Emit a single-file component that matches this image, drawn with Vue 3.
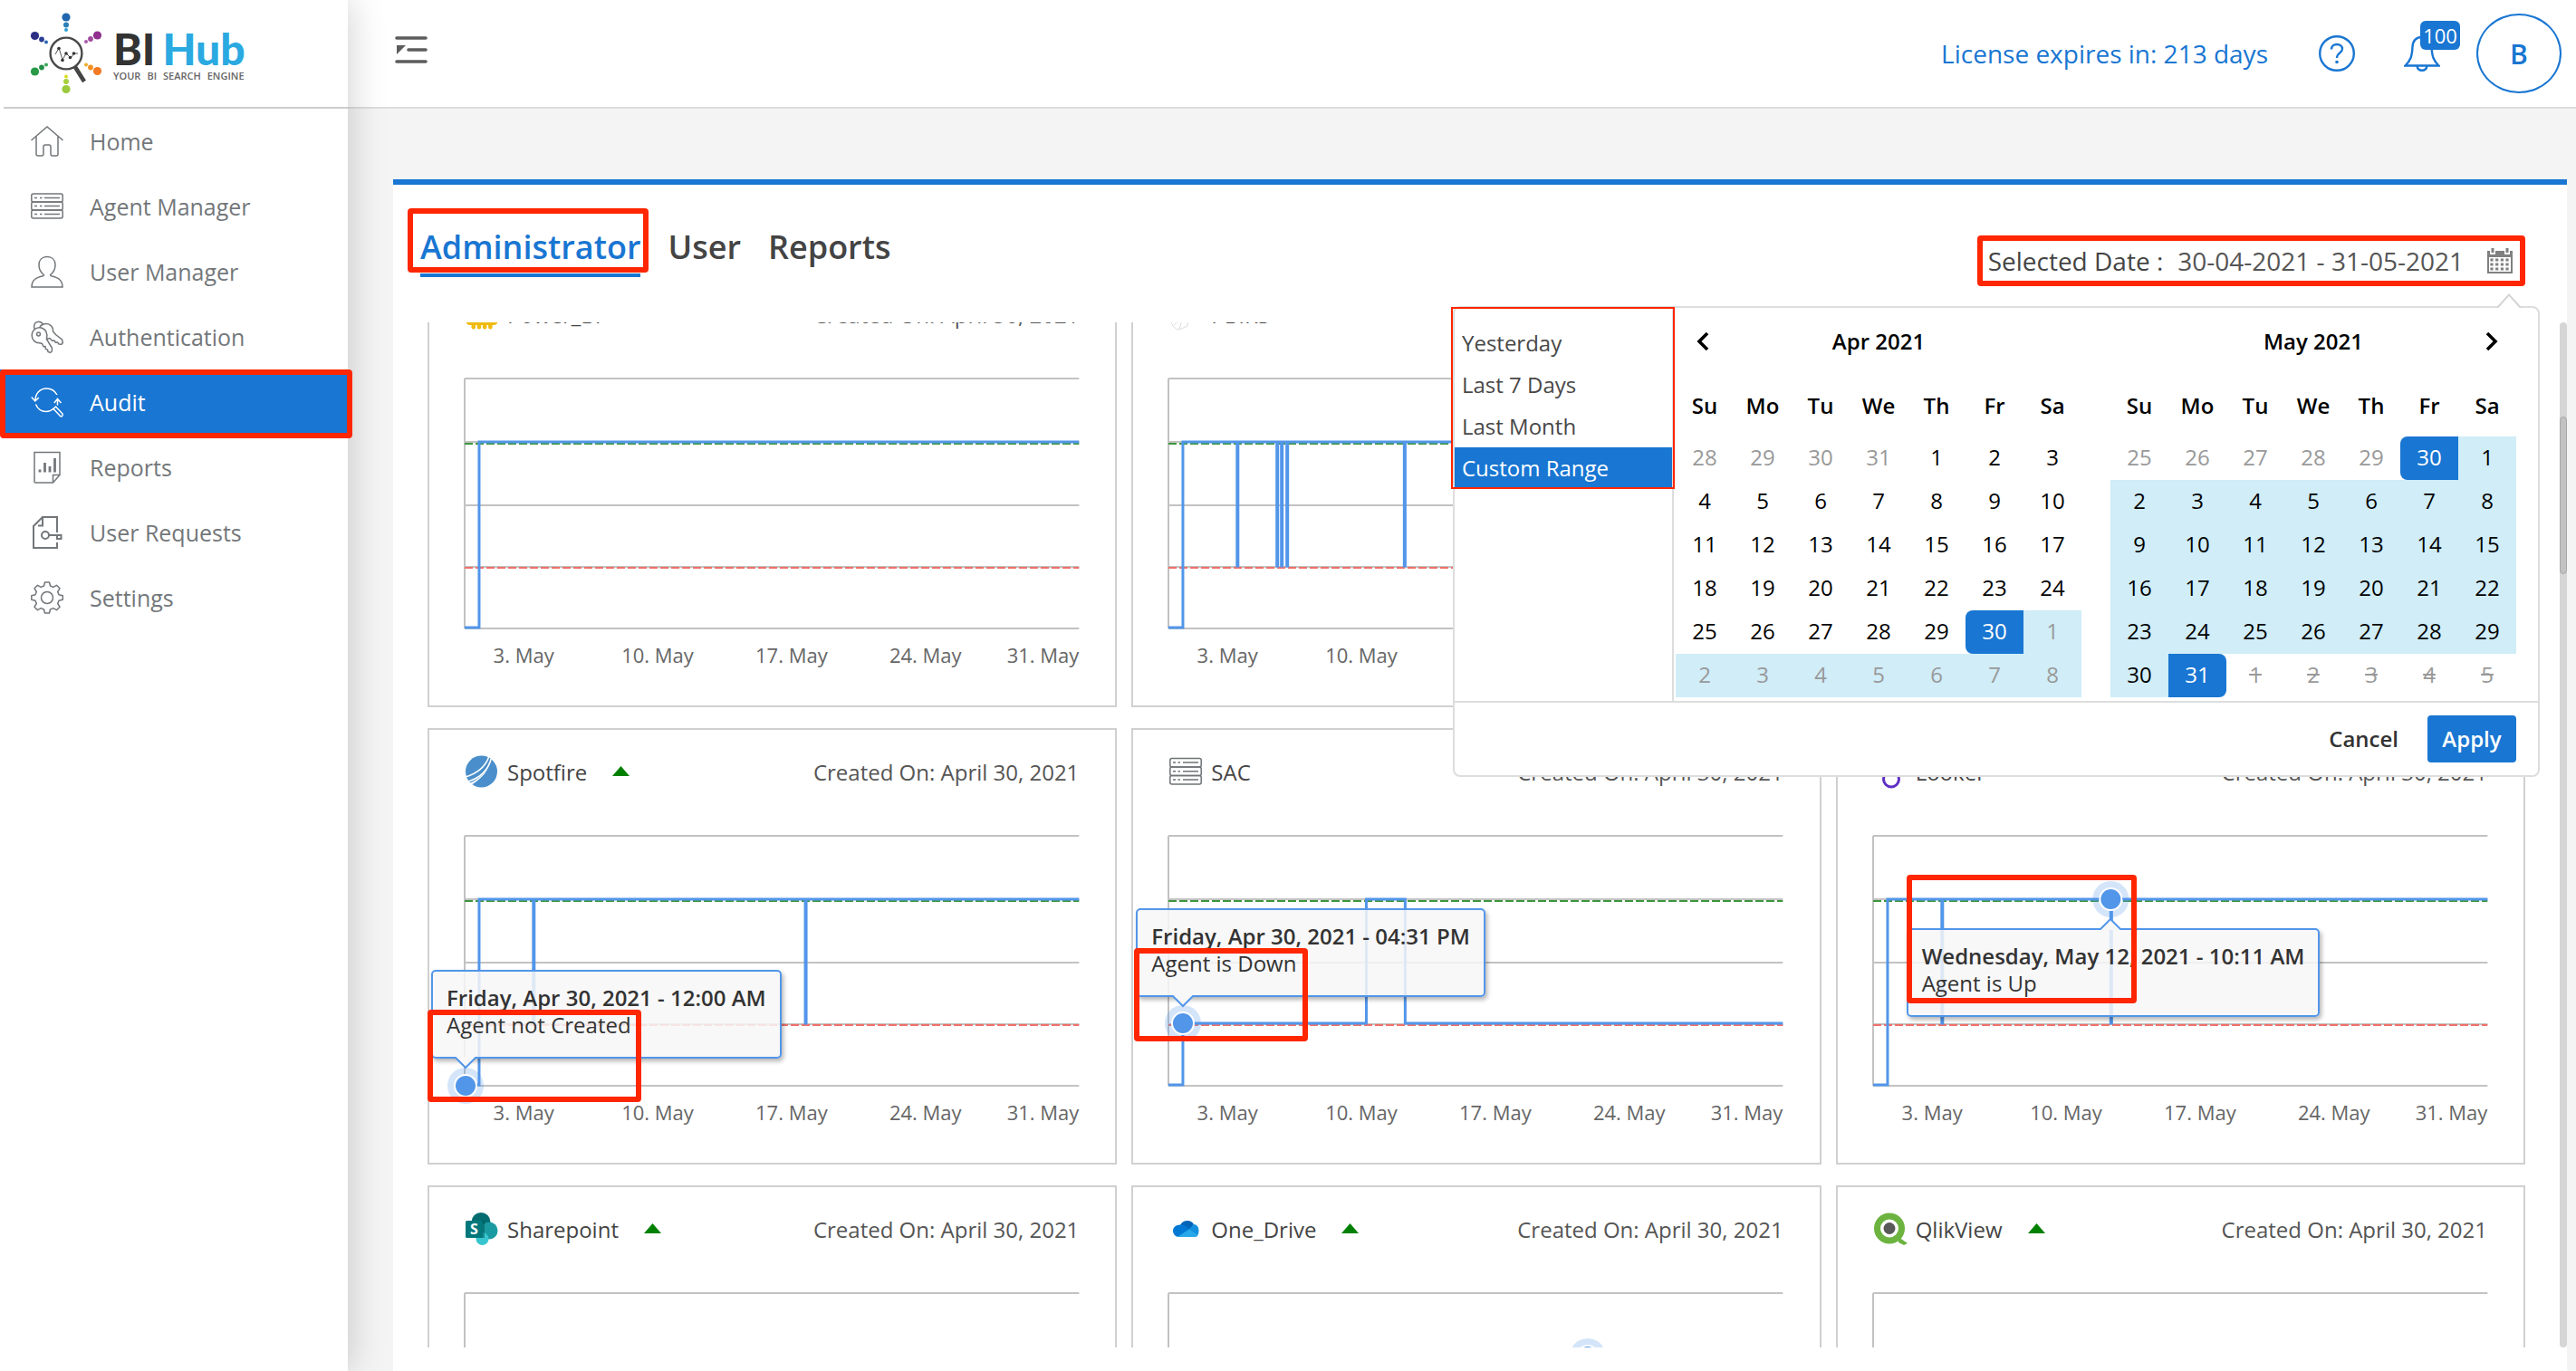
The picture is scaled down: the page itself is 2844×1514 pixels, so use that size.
<script setup>
import { ref } from 'vue'

const nav = [
  { label: 'Home', icon: 'home' },
  { label: 'Agent Manager', icon: 'server' },
  { label: 'User Manager', icon: 'user' },
  { label: 'Authentication', icon: 'keys' },
  { label: 'Audit', icon: 'audit', active: true },
  { label: 'Reports', icon: 'report' },
  { label: 'User Requests', icon: 'request' },
  { label: 'Settings', icon: 'gear' },
]

const tabs = ['Administrator', 'User', 'Reports']
const activeTab = ref('Administrator')

const presets = ['Yesterday', 'Last 7 Days', 'Last Month', 'Custom Range']
const activePreset = ref('Custom Range')

const weekdays = ['Su', 'Mo', 'Tu', 'We', 'Th', 'Fr', 'Sa']

// Builds six weeks of cells; `first` is the date in the top-left corner.
function buildMonth(title, month, first) {
  const rangeStart = new Date(2021, 3, 30)
  const rangeEnd = new Date(2021, 4, 31)
  const weeks = []
  for (let w = 0; w < 6; w++) {
    const row = []
    for (let d = 0; d < 7; d++) {
      const day = new Date(first.getFullYear(), first.getMonth(), first.getDate() + w * 7 + d)
      row.push({
        n: day.getDate(),
        cls: {
          off: day.getMonth() !== month,
          'in-range': day > rangeStart && day < rangeEnd,
          start: +day === +rangeStart,
          end: +day === +rangeEnd,
          disabled: day > rangeEnd,
        },
      })
    }
    weeks.push(row)
  }
  return { title, weeks }
}

const months = [
  buildMonth('Apr 2021', 3, new Date(2021, 2, 28)),
  buildMonth('May 2021', 4, new Date(2021, 3, 25)),
]

const ticks = [
  { x: '9.6%', label: '3. May', anchor: 'middle' },
  { x: '31.4%', label: '10. May', anchor: 'middle' },
  { x: '53.2%', label: '17. May', anchor: 'middle' },
  { x: '75%', label: '24. May', anchor: 'middle' },
  { x: '100%', label: '31. May', anchor: 'end' },
]

// Plot space is 680 units wide. Levels: up, down, not created.
const UP = 71
const DOWN = 208
const NONE = 276

function upWithDrops(drops) {
  let d = `M0 ${NONE}H16V${UP}`
  for (const x of drops) d += `H${x}V${DOWN}H${x + 1}V${UP}`
  return d + 'H680'
}

const agents = [
  { name: 'Power_BI', icon: 'powerbi', up: true, path: upWithDrops([]) },
  { name: 'PBIRS', icon: 'pbirs', up: true, path: upWithDrops([76, 120, 125, 131, 261]) },
  { name: 'Tableau', icon: 'server', up: true, path: upWithDrops([]) },
  {
    name: 'Spotfire', icon: 'spotfire', up: true, path: upWithDrops([76, 377]),
    marker: { x: 1, y: 277 },
    tip: { left: -37, top: 149, arrow: 38, dir: 'down', title: 'Friday, Apr 30, 2021 - 12:00 AM', text: 'Agent not Created' },
    callout: { left: -41, top: 193, width: 236, height: 102 },
  },
  {
    name: 'SAC', icon: 'server', up: false,
    path: `M0 ${NONE}H16V${DOWN}H219V${UP}H262V${DOWN}H680`,
    marker: { x: 16, y: 208 },
    tip: { left: -36, top: 81, arrow: 52, dir: 'down', title: 'Friday, Apr 30, 2021 - 04:31 PM', text: 'Agent is Down' },
    callout: { left: -38, top: 125, width: 192, height: 103 },
  },
  {
    name: 'Looker', icon: 'looker', up: true, path: upWithDrops([76, 263]),
    marker: { x: 263, y: 71 },
    tip: { left: 37, top: 103, arrow: 225, dir: 'up', title: 'Wednesday, May 12, 2021 - 10:11 AM', text: 'Agent is Up' },
    callout: { left: 37, top: 44, width: 254, height: 142 },
  },
  { name: 'Sharepoint', icon: 'sharepoint', up: true, path: upWithDrops([]) },
  { name: 'One_Drive', icon: 'onedrive', up: true, path: upWithDrops([]), marker: { x: 464, y: 71 } },
  { name: 'QlikView', icon: 'qlik', up: true, path: upWithDrops([]) },
]
</script>

<template>
  <div class="app">
    <aside class="sidebar">
      <div class="brand">
        <svg class="brand-mark" viewBox="0 0 80 90" aria-hidden="true">
          <g>
            <circle cx="40" cy="5" r="4.6" fill="#2066ac" /><circle cx="40" cy="13.5" r="3" fill="#2b7fb8" /><circle cx="40" cy="19" r="2" fill="#2c9fd0" />
            <circle cx="74.5" cy="25" r="4.6" fill="#90308f" /><circle cx="67" cy="29" r="2.9" fill="#a04ba0" /><circle cx="62" cy="32" r="2" fill="#a85aa8" />
            <circle cx="74.5" cy="64.5" r="4.6" fill="#f27a24" /><circle cx="67" cy="60.5" r="2.9" fill="#f59120" /><circle cx="62" cy="57.5" r="2" fill="#edae28" />
            <circle cx="40" cy="84.5" r="4.6" fill="#9bca3c" /><circle cx="40" cy="76" r="3" fill="#a5cf3c" /><circle cx="40" cy="70.5" r="2" fill="#d9e021" />
            <circle cx="5.5" cy="65" r="4.6" fill="#289a48" /><circle cx="13" cy="60.5" r="2.9" fill="#259048" /><circle cx="18" cy="57.5" r="2" fill="#3aa655" />
            <circle cx="5.5" cy="25.5" r="4.6" fill="#2b2e83" /><circle cx="13" cy="29.5" r="2.9" fill="#2a3f96" /><circle cx="18" cy="32.5" r="2" fill="#2a66b0" />
          </g>
          <circle cx="40" cy="45" r="17.4" fill="#fff" stroke="#484848" stroke-width="2.4" />
          <path d="M50 60l10 16" stroke="#444" stroke-width="4.6" />
          <path d="M28 46l4-7 4 13 4-7 5 5 4-5h4" fill="none" stroke="#555" stroke-width="1" />
          <g fill="#333"><circle cx="32" cy="39.5" r="1.8" /><circle cx="36" cy="52.5" r="1.8" /><circle cx="40" cy="45" r="1.8" /><circle cx="44.5" cy="49.5" r="1.8" /><circle cx="48.5" cy="45" r="1.8" /></g>
        </svg>
        <div class="brand-text">
          <div class="brand-name"><span class="dark">BI</span><span class="blue">Hub</span></div>
          <div class="brand-tag"><span>YOUR</span><span>BI</span><span>SEARCH</span><span>ENGINE</span></div>
        </div>
      </div>
      <nav class="nav">
        <a v-for="item in nav" :key="item.label" href="#" class="nav-item" :class="{ active: item.active }">
          <svg class="nav-icon" viewBox="0 0 36 36" aria-hidden="true">
            <path v-if="item.icon === 'home'" d="M.5 17L18 2l17.500 15M6 12.500V32q0 2 2 2h4q2 0 2-2v-8q0-2 2-2h4q2 0 2 2v8q0 2 2 2h4q2 0 2-2V12.500" />
            <g v-else-if="item.icon === 'server'">
              <rect x=".8" y="4" width="34.4" height="9" rx="2" /><rect x=".8" y="13" width="34.4" height="9" rx="2" /><rect x=".8" y="22" width="34.4" height="9" rx="2" />
              <path d="M4 8.500h3M10 8.500h2.500M15 8.500h17M4 17.500h3M10 17.500h2.500M15 17.500h17M4 26.500h3M10 26.500h2.500M15 26.500h17" />
            </g>
            <path v-else-if="item.icon === 'user'" d="M14.500 21.500C11 19 9 14.500 9 10.500 9 5 12.500 1.500 18 1.500s9 3.500 9 9c0 4-2 8.500-5.500 11 0 1 0 1 1 1.300C30 24.500 35 27 35 35H1c0-8 5-10.500 12.500-12.200 1-.3 1-.3 1-1.300z" />
            <g v-else-if="item.icon === 'keys'">
              <circle cx="8.5" cy="15" r="1.9" /><path d="M13 8.500C7.500 6 1.200 10 1.200 16.500c0 5 4 8.500 8.500 8.200l2.800.8 1.500 3.200 2-.2.5 3 2 .5.5 2.500 2.500 1 1.800-1.500.2-3.500-6-10C18.500 15.500 17.500 10.500 13 8.500z" />
              <path d="M4 9.500C2.500 4.500 5 1.200 8.500 1.200c2.500 0 4 1 5 3C20 2 25 6.500 24.500 12l3 3.500 7 5.500.8 3.500-1.300 1.700-3-.2-1.500-2-2.200.2-1.300-2.200-2.500.2L21 19.500l-4 1M10 8c0-2 1-3 3.500-3.800" />
            </g>
            <g v-else-if="item.icon === 'audit'">
              <path d="M5 16C5 8.500 10 3 17.500 3c5 0 9 2.500 11.500 7M.8 12.500L4.800 17l4-4M5.500 20.500C7.500 25.500 12 28.500 17 28.500c3.500 0 6-1.200 8.500-3.500M29.500 21.500V15M25.800 19l3.700-4.500L33.500 19" />
              <path d="M25 25.500l2.500-2.500 7.500 8c1 1.500-.8 3.500-2.500 2.500z" />
            </g>
            <g v-else-if="item.icon === 'report'">
              <path d="M4 1.500h28v25L24.500 35H5q-1 0-1-1zM32 26.500h-7.500V35" /><path d="M10 20.500v3M15.500 13v10.500M21 17v6.500M26.500 8v15.500" stroke-width="2.8" />
            </g>
            <g v-else-if="item.icon === 'request'" stroke-width="2">
              <path d="M29 18V1H13L3 11v24h26v-6M13 1v9.500H8" /><circle cx="16" cy="21" r="4" /><path d="M20 21h13.500v4H29v-4" />
            </g>
            <g v-else>
              <circle cx="18" cy="18" r="6.5" />
              <path d="M15.500 1h5l1 4 3.300 1.400L28.500 4.300 32 7.800l-2.300 3.700L31 14.700l4.300 1v4.600l-4.300 1-1.300 3.200 2.300 3.700-3.500 3.500-3.700-2.100-3.300 1.400-1 4h-5l-1-4-3.300-1.400-3.700 2.100L4 28.200l2.300-3.700L5 21.300l-4.200-1v-4.600l4.200-1 1.300-3.200L4 7.800l3.500-3.500 3.700 2.100L14.500 5z" stroke-linejoin="round" />
            </g>
          </svg>
          <span>{{ item.label }}</span>
          <i v-if="item.active" class="callout nav-callout"></i>
        </a>
      </nav>
    </aside>

    <div class="main">
      <header class="topbar">
        <button class="icon-btn menu" aria-label="Toggle menu">
          <svg width="36" height="30" viewBox="0 0 36 30"><path d="M2 2h32M15 15h19M2 28h32" stroke="#5c5c5c" stroke-width="3.6" stroke-linecap="round" /><path d="M2 10h10L2 20z" fill="#5c5c5c" /></svg>
        </button>
        <span class="license">License expires in: 213 days</span>
        <button class="icon-btn help" aria-label="Help">
          <svg width="40" height="40" viewBox="0 0 40 40" fill="none" stroke="#1976d2"><circle cx="20" cy="20" r="18.8" stroke-width="2.4" /><path d="M14 15.500c0-3.500 2.500-5.500 6-5.500s6 2 6 5c0 4.500-6 4.500-6 10" stroke-width="2.4" /><circle cx="20" cy="29.5" r="1.8" fill="#1976d2" stroke="none" /></svg>
        </button>
        <button class="icon-btn bell" aria-label="Notifications">
          <svg width="40" height="40" viewBox="0 0 40 40" fill="none" stroke="#1976d2" stroke-width="2.4"><path d="M20 2c-7 0-10 4.500-10.500 10.500C9 24 7 28 1.500 33.500h37C33 28 31 24 30.500 12.500 30 6.500 27 2 20 2zM14.500 34c.5 3 2.500 4.800 5.500 4.800s5-1.800 5.500-4.800" /></svg>
          <span class="badge">100</span>
        </button>
        <button class="avatar">B</button>
      </header>

      <section class="panel">
        <div class="toolbar">
          <div class="tabs" role="tablist">
            <button v-for="t in tabs" :key="t" role="tab" class="tab" :class="{ active: t === activeTab }" @click="activeTab = t">
              {{ t }}<i v-if="t === activeTab" class="callout tab-callout"></i>
            </button>
          </div>
          <button class="date-trigger">
            <span class="date-label">Selected Date :</span>
            <span class="date-value">30-04-2021 - 31-05-2021</span>
            <svg width="28" height="28" viewBox="0 0 28 28"><path d="M0 3h3v4h6V3h10v4h6V3h3v25H0z" fill="#808080" /><rect x="2" y="10" width="24" height="16" fill="#fff" /><path d="M4.500 0h3v5h-3zM20.500 0h3v5h-3z" fill="#808080" /><path d="M5 11.500v13M10.700 11.500v13M16.400 11.500v13M22 11.500v13" stroke="#808080" stroke-width="3.2" stroke-dasharray="3 2" /></svg>
            <i class="callout fill"></i>
          </button>
        </div>

        <div class="scroller">
          <div class="viewport">
            <div class="grid">
              <article v-for="a in agents" :key="a.name" class="card">
                <header class="card-head">
                  <svg class="logo" viewBox="0 0 36 36" aria-hidden="true">
                    <g v-if="a.icon === 'powerbi'" fill="#eebb11"><path d="M2 10h32v15q0 3.500-3 3.500H5q-3 0-3-3.500z" fill="none" stroke="#eebb11" stroke-width="3" /><rect x="6.5" y="20" width="4.5" height="14.500" rx="2" /><rect x="12.7" y="12" width="4.5" height="22.500" rx="2" /><rect x="18.900" y="8" width="4.500" height="26.500" rx="2" /><rect x="25.100" y="4" width="4.500" height="30.500" rx="2" /></g>
                    <g v-else-if="a.icon === 'pbirs'" fill="none" stroke="#dcdcdc"><path d="M1 20c0 9 5 15 10 15l9-4V16zM5 30l14-12M11 35l4-14M2 25h17" /></g>
                    <g v-else-if="a.icon === 'spotfire'"><circle cx="17.500" cy="18" r="17.500" fill="#4a8fcb" /><path d="M26 1C22 13 13 20 0 24M28.500 3C25 17 16 25 3 29" fill="none" stroke="#fff" stroke-width="1.600" /><path d="M28 3C26 16 17 26 4 31l2 2C18 26 26 17 28 3z" fill="#fff" /></g>
                    <g v-else-if="a.icon === 'server'" fill="none" stroke="#6f7376" stroke-width="1.500"><rect x=".8" y="3.500" width="34.400" height="9.500" rx="2" /><rect x=".8" y="13" width="34.400" height="9.500" rx="2" /><rect x=".8" y="22.500" width="34.400" height="9.500" rx="2" /><path d="M4 8h3M9.500 8H12M15 8h17M4 17.700h3M9.500 17.700H12M15 17.700h17M4 27h3M9.500 27H12M15 27h17" /></g>
                    <g v-else-if="a.icon === 'looker'" fill="none" stroke="#5f2fc4" stroke-width="3"><circle cx="19" cy="26.500" r="8.500" /><circle cx="14" cy="10" r="4" /><circle cx="9" cy="3" r="1.500" /></g>
                    <g v-else-if="a.icon === 'sharepoint'"><circle cx="17" cy="10.500" r="10.500" fill="#036c70" /><circle cx="26" cy="20" r="9.500" fill="#1a9ba1" /><circle cx="18.500" cy="29" r="7" fill="#37c6d0" /><rect x="11" y="9" width="10" height="19" fill="#024f52" opacity=".5" /><rect y="9" width="19" height="19" rx="1.500" fill="#03787c" /><text x="9.500" y="24" text-anchor="middle" font-size="16" font-weight="700" fill="#fff">S</text></g>
                    <g v-else-if="a.icon === 'onedrive'" transform="translate(2 0)"><path d="M10 14a8.500 8.500 0 0 1 15-1l-5 7z" fill="#0364b8" /><path d="M10 13.500c-5 0-8 3-8 6.500 0 4 3 7 6.500 7L20 19c-3-4-6-5.500-10-5.500z" fill="#0078d4" /><path d="M25 13c4 0 5.500 4 5.500 7.500S29 26 27 27l-8-8z" fill="#1490df" /><path d="M6.500 27L20 18.500 29.500 25q-1 2-3.500 2z" fill="#28a8ea" /></g>
                    <g v-else><path d="M27 27l10 7-4 2-6-3z" fill="#6cb33f" /><circle cx="17" cy="17.500" r="13.500" fill="none" stroke="#6cb33f" stroke-width="7" /><circle cx="17" cy="17.500" r="6.500" fill="#595959" /></g>
                  </svg>
                  <h3>{{ a.name }}</h3>
                  <svg v-if="a.up" class="trend" width="20" height="12" viewBox="0 0 20 12"><path d="M9.500 0L19 11H0z" fill="green" /></svg>
                  <span class="created">Created On: April 30, 2021</span>
                </header>
                <div class="chart">
                  <svg class="chart-svg" aria-hidden="true">
                    <svg class="plot" width="100%" height="278" viewBox="0 0 680 278" preserveAspectRatio="none">
                      <path class="gridline" d="M0 1H680M0 71H680M0 141H680M0 209H680M0 277H680M0 1V277" />
                      <path class="limit up" d="M0 73H680" />
                      <path class="limit down" d="M0 210H680" />
                      <path class="series" :d="a.path" />
                    </svg>
                    <text v-for="t in ticks" :key="t.label" :x="t.x" y="315" :text-anchor="t.anchor">{{ t.label }}</text>
                    <g v-if="a.marker">
                      <circle :cx="(a.marker.x / 6.8) + '%'" :cy="a.marker.y" r="20" fill="#5296ea" opacity=".25" />
                      <circle :cx="(a.marker.x / 6.8) + '%'" :cy="a.marker.y" r="12" fill="#5296ea" stroke="#fff" stroke-width="2" />
                    </g>
                  </svg>
                  <div v-if="a.tip" class="tip" :style="{ left: a.tip.left + 'px', top: a.tip.top + 'px' }">
                    <strong>{{ a.tip.title }}</strong>
                    <span>{{ a.tip.text }}</span>
                    <svg class="tip-arrow" :class="a.tip.dir" width="26" height="14" viewBox="0 0 26 14" :style="{ left: a.tip.arrow - 15 + 'px' }">
                      <path :d="a.tip.dir === 'down' ? 'M1 0L13 12 25 0' : 'M1 14L13 2 25 14'" fill="#f7f7f7" stroke="#5296ea" stroke-width="2" />
                    </svg>
                  </div>
                  <i v-if="a.callout" class="callout" :style="{ left: a.callout.left + 'px', top: a.callout.top + 'px', width: a.callout.width + 'px', height: a.callout.height + 'px' }"></i>
                </div>
              </article>
            </div>
          </div>
          <div class="scrollbar"><div class="thumb"></div></div>
        </div>

        <div class="picker">
          <svg class="picker-arrow" width="28" height="16" viewBox="0 0 28 16"><path d="M1 16L14 1.500 27 16" fill="#fff" stroke="#d4d4d4" stroke-width="2" /></svg>
          <div class="picker-body">
            <div class="presets">
              <ul>
                <li v-for="p in presets" :key="p">
                  <button :class="{ active: p === activePreset }" @click="activePreset = p">{{ p }}</button>
                </li>
              </ul>
              <i class="callout thin presets-callout"></i>
            </div>
            <div class="months">
              <table v-for="(m, i) in months" :key="m.title">
                <thead>
                  <tr class="title-row">
                    <th><button v-if="i === 0" class="arrow prev" aria-label="Previous month"><svg width="16" height="22" viewBox="0 0 16 22"><path d="M13 2L4 11l9 9" fill="none" stroke="#000" stroke-width="3.6" /></svg></button></th>
                    <th colspan="5">{{ m.title }}</th>
                    <th><button v-if="i === 1" class="arrow next" aria-label="Next month"><svg width="16" height="22" viewBox="0 0 16 22"><path d="M3 2l9 9-9 9" fill="none" stroke="#000" stroke-width="3.6" /></svg></button></th>
                  </tr>
                  <tr class="week-row"><th v-for="w in weekdays" :key="w">{{ w }}</th></tr>
                </thead>
                <tbody>
                  <tr v-for="(row, r) in m.weeks" :key="r">
                    <td v-for="(c, k) in row" :key="k" :class="c.cls">{{ c.n }}</td>
                  </tr>
                </tbody>
              </table>
            </div>
          </div>
          <div class="picker-foot">
            <button class="cancel">Cancel</button>
            <button class="apply">Apply</button>
          </div>
        </div>
      </section>
    </div>
  </div>
</template>

<style>
body { background: #f4f4f4; }
</style>

<style scoped>
* { box-sizing: border-box; }
.app {
  display: flex;
  height: 100vh;
  overflow: hidden;
  font-family: "Open Sans", "Noto Sans", sans-serif;
  font-size: 24px;
  color: #444;
}
button { font: inherit; color: inherit; background: none; border: 0; padding: 0; margin: 0; cursor: pointer; }
.icon-btn { display: inline-flex; position: relative; }
.callout {
  position: absolute;
  border: 6px solid #ff2600;
  border-radius: 4px;
  pointer-events: none;
  z-index: 5;
}
.callout.thin { border-width: 2px; border-radius: 0; }
.callout.fill { inset: 0; }

.sidebar {
  position: relative;
  z-index: 4;
  flex: none;
  width: 384px;
  background: #fff;
  box-shadow: 0 0 40px rgba(0, 0, 0, .2);
}
.brand {
  display: flex;
  align-items: center;
  gap: 12px;
  height: 120px;
  margin-left: 4px;
  padding-left: 29px;
  border-bottom: 2px solid #ccc;
}
.brand-mark { width: 80px; height: 90px; flex: none; }
.brand-name { display: flex; gap: 8px; padding-top: 2px; font: 900 48px/48px Lato, sans-serif; }
.brand-name .dark { color: #333; }
.brand-name .blue { color: #2ba9e1; }
.brand-tag { display: flex; gap: 7px; font-size: 11px; line-height: 12px; font-weight: 600; color: #666; }

.nav-item {
  position: relative;
  display: flex;
  align-items: center;
  gap: 29px;
  height: 72px;
  padding-left: 34px;
  font-size: 25px;
  color: #73777a;
  text-decoration: none;
}
.nav-item.active { background: #1976d2; color: #fff; }
.nav-icon { width: 36px; height: 36px; fill: none; stroke: currentColor; stroke-width: 1.5; overflow: visible; }
.nav-callout { inset: 0 -5px -4px 0; }

.main { flex: 1; min-width: 0; display: flex; flex-direction: column; }
.topbar {
  flex: none;
  display: flex;
  align-items: center;
  height: 120px;
  padding: 0 16px 0 52px;
  background: #fff;
  border-bottom: 2px solid #ddd;
  color: #1976d2;
}
.menu { margin: 0 auto 8px 0; }
.license { font-size: 28px; }
.help { margin-left: 56px; }
.bell { margin-left: 54px; }
.badge {
  position: absolute;
  left: 18px;
  top: -16px;
  width: 44px;
  height: 32px;
  border-radius: 6px;
  background: #1976d2;
  color: #fff;
  font-size: 22px;
  line-height: 32px;
  text-align: center;
}
.avatar {
  width: 94px;
  height: 88px;
  margin-left: 40px;
  border: 2px solid #1976d2;
  border-radius: 50%;
  font-size: 30px;
  font-weight: 600;
}

.panel {
  position: relative;
  flex: 1;
  min-height: 0;
  display: flex;
  flex-direction: column;
  margin: 78px 10px 0 50px;
  padding-bottom: 26px;
  background: #fff;
  border-top: 6px solid #1976d2;
}
.toolbar {
  flex: none;
  display: flex;
  justify-content: space-between;
  align-items: flex-start;
  height: 152px;
  padding: 44px 46px 0 30px;
}
.tabs { display: flex; gap: 30px; }
.tab {
  position: relative;
  padding-bottom: 4px;
  border-bottom: 4px solid transparent;
  font-size: 36px;
  line-height: 50px;
  font-weight: 600;
}
.tab.active { color: #1976d2; border-color: #1976d2; }
.tab-callout { inset: -18px -9px 1px -14px; }
.date-trigger {
  position: relative;
  display: flex;
  align-items: center;
  height: 56px;
  margin-top: 12px;
  padding: 0 14px 0 12px;
  font-size: 28px;
}
.date-value { margin: 0 26px 0 16px; color: #555; }

.scroller { flex: 1; min-height: 0; display: flex; }
.viewport { flex: 1; min-width: 0; overflow: hidden; padding: 0 38px; }
.grid {
  display: grid;
  grid-template-columns: repeat(3, minmax(0, 1fr));
  gap: 23px 16px;
  margin-top: -57px;
}
.scrollbar { width: 8px; border-radius: 4px; background: #d6d6d6; padding-top: 104px; }
.thumb { height: 174px; border-radius: 4px; background: #c2c2c2; border: 1px solid #a8a8a8; }

.card { border: 2px solid #d0d0d0; padding: 28px 40px 42px 39px; }
.card-head { display: flex; align-items: center; height: 36px; padding-left: 1px; }
.logo { width: 36px; height: 36px; flex: none; overflow: visible; }
h3 { margin: 0 0 0 10px; font-size: 24px; font-weight: 400; }
.trend { margin-left: 28px; }
.created { margin-left: auto; color: #555; }
.chart { position: relative; margin-top: 52px; }
.chart-svg { display: block; width: 100%; height: 320px; overflow: visible; font-size: 22px; fill: #666; }
.plot { overflow: visible; }
.plot path { fill: none; vector-effect: non-scaling-stroke; stroke-width: 2; }
.gridline { stroke: #c2c2c2; }
.limit { stroke-dasharray: 9 3; }
.limit.up { stroke: #3c963c; }
.limit.down { stroke: #f0706a; }
.plot .series { stroke: #5296ea; stroke-width: 3; }
.tip {
  position: absolute;
  padding: 14px 15px 20px;
  background: rgba(247, 247, 247, .85);
  border: 2px solid #5296ea;
  border-radius: 5px;
  box-shadow: 2px 3px 5px rgba(0, 0, 0, .3);
  line-height: 30px;
  color: #333;
  white-space: nowrap;
}
.tip strong, .tip span { display: block; }
.tip strong { font-weight: 600; }
.tip-arrow { position: absolute; }
.tip-arrow.down { top: 100%; }
.tip-arrow.up { bottom: 100%; }

.picker {
  position: absolute;
  z-index: 10;
  top: 134px;
  right: 30px;
  background: #fff;
  border: 2px solid #ddd;
  border-radius: 8px;
  color: #000;
}
.picker-arrow { position: absolute; top: -16px; right: 18px; }
.picker-body { display: flex; border-bottom: 2px solid #ddd; }
.presets {
  position: relative;
  width: 242px;
  padding-top: 16px;
  border-right: 2px solid #ddd;
  color: #484848;
}
.presets ul { margin: 0; padding: 0; list-style: none; }
.presets button { display: block; width: 100%; height: 46px; padding: 0 8px 2px; text-align: left; }
.presets button.active { background: #1976d2; color: #fff; }
.presets-callout { left: -4px; right: -3px; top: -1px; height: 201px; }
.months { display: flex; gap: 32px; padding: 0 24px 4px 2px; }
table { border-collapse: collapse; table-layout: fixed; width: 448px; }
th, td { padding: 0 0 2px; height: 48px; text-align: center; font-weight: 400; line-height: 32px; }
th { font-weight: 600; }
.title-row th { height: 76px; }
.week-row th { height: 66px; }
.arrow { display: flex; width: 100%; justify-content: center; }
.arrow.prev { padding-right: 4px; }
.arrow.next { padding-left: 10px; }
td.off { color: #999; }
td.in-range { background: #d0edf8; }
td.start, td.end { background: #1976d2; color: #fff; }
td.start { border-radius: 8px 0 0 8px; }
td.end { border-radius: 0 8px 8px 0; }
td.disabled { text-decoration: line-through; }
.picker-foot { display: flex; justify-content: flex-end; align-items: center; gap: 32px; padding: 14px 24px; font-weight: 600; }
.picker-foot button { height: 52px; padding-bottom: 2px; }
.cancel { color: #333; }
.apply { width: 98px; border-radius: 4px; background: #1976d2; color: #fff; }
</style>
